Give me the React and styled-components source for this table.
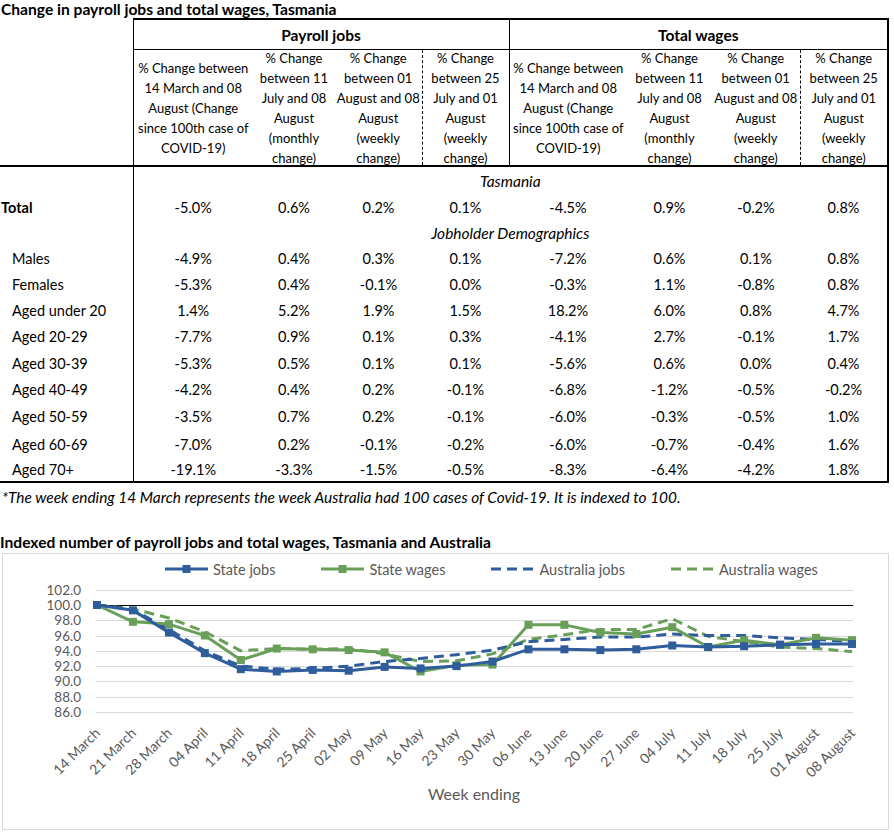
import React from 'react';
import styled, {createGlobalStyle} from 'styled-components';

const GlobalStyle = createGlobalStyle`
  body {
    margin: 0;
    background: #ffffff;
    font-family: Lato, "Liberation Sans", sans-serif;
    color: #000000;
  }
`;

const Page = styled.div`
  width: 894px;
`;

const Title = styled.div`
  font-weight: bold;
  font-size: 15.6px;
  line-height: 18px;
  padding-left: 1px;
`;

const Table = styled.table`
  border-collapse: collapse;
  table-layout: fixed;
  width: 888px;
  font-size: 14.5px;
`;

const EmptyCell = styled.td`
  border-right: 1px solid #000;
  border-bottom: 2px solid #000;
  padding: 0;
`;

const GroupHead = styled.th`
  border-top: 2px solid #000;
  border-bottom: 1px solid #000;
  border-right: ${props => props.$last ? '2px' : '1px'} solid #000;
  height: 29px;
  padding: 0;
  font-size: 15.5px;
  font-weight: bold;
  text-align: center;
`;

const SubHead = styled.td`
  border-bottom: 2px solid #000;
  border-right: ${props => ({dashed: '1px dashed #000', solid: '1px solid #000', thick: '2px solid #000'}[props.$edge] || 'none')};
  padding: 0;
  font-size: 13px;
  text-align: center;
`;

const SubHeadText = styled.div`
  height: 115px;
  line-height: 20px;
  display: flex;
  align-items: center;
  justify-content: center;
  overflow: hidden;
`;

const BodyRow = styled.tr`
  height: ${props => props.$h || 26}px;
  &:last-child td {
    border-bottom: 2px solid #000;
  }
`;

const LabelCell = styled.td`
  border-right: 1px solid #000;
  padding: 0 0 0 ${props => props.$bold ? 1 : 12}px;
  font-weight: ${props => props.$bold ? 'bold' : 'normal'};
  white-space: nowrap;
`;

const ValueCell = styled.td`
  text-align: center;
  padding: 0;
  border-right: ${props => props.$last ? '2px solid #000' : 'none'};
`;

const SectionCell = styled.td`
  text-align: center;
  font-style: italic;
  font-size: 15.5px;
  padding: 0;
  border-right: 2px solid #000;
`;

const Footnote = styled.div`
  font-style: italic;
  font-size: 15.4px;
  line-height: 20px;
  margin-top: 4px;
  padding-left: 2px;
`;

const ChartTitle = styled(Title)`
  margin-top: 26px;
  padding-left: 0;
`;

const ChartBox = styled.div`
  margin: 2px 0 0 2px;
  width: 885px;
  border: 1px solid #d9d9d9;
`;

const Legend = styled.div`
  height: 30px;
  display: flex;
  align-items: center;
  gap: 46px;
  padding-left: 162px;
  font-size: 14.5px;
  color: #595959;
`;

const LegendItem = styled.div`
  display: flex;
  align-items: center;
  gap: 5px;
`;

const Plot = styled.svg`
  display: block;
  overflow: visible;
  font-family: Lato, "Liberation Sans", sans-serif;
`;

const BLUE = '#2f5d9b';
const GREEN = '#6a9f5a';

const heads = [
  ['% Change between', '14 March and 08', 'August (Change', 'since 100th case of', 'COVID-19)'],
  ['% Change', 'between 11', 'July and 08', 'August', '(monthly', 'change)'],
  ['% Change', 'between 01', 'August and 08', 'August', '(weekly', 'change)'],
  ['% Change', 'between 25', 'July and 01', 'August', '(weekly', 'change)'],
];

const rows = [
  {section: 'Tasmania', h: 28},
  {label: 'Total', bold: true, h: 26, v: ['-5.0%', '0.6%', '0.2%', '0.1%', '-4.5%', '0.9%', '-0.2%', '0.8%']},
  {section: 'Jobholder Demographics', h: 25},
  {label: 'Males', v: ['-4.9%', '0.4%', '0.3%', '0.1%', '-7.2%', '0.6%', '0.1%', '0.8%']},
  {label: 'Females', v: ['-5.3%', '0.4%', '-0.1%', '0.0%', '-0.3%', '1.1%', '-0.8%', '0.8%']},
  {label: 'Aged under 20', v: ['1.4%', '5.2%', '1.9%', '1.5%', '18.2%', '6.0%', '0.8%', '4.7%']},
  {label: 'Aged 20-29', h: 27, v: ['-7.7%', '0.9%', '0.1%', '0.3%', '-4.1%', '2.7%', '-0.1%', '1.7%']},
  {label: 'Aged 30-39', v: ['-5.3%', '0.5%', '0.1%', '0.1%', '-5.6%', '0.6%', '0.0%', '0.4%']},
  {label: 'Aged 40-49', v: ['-4.2%', '0.4%', '0.2%', '-0.1%', '-6.8%', '-1.2%', '-0.5%', '-0.2%']},
  {label: 'Aged 50-59', h: 29, v: ['-3.5%', '0.7%', '0.2%', '-0.1%', '-6.0%', '-0.3%', '-0.5%', '1.0%']},
  {label: 'Aged 60-69', v: ['-7.0%', '0.2%', '-0.1%', '-0.2%', '-6.0%', '-0.7%', '-0.4%', '1.6%']},
  {label: 'Aged 70+', h: 25, v: ['-19.1%', '-3.3%', '-1.5%', '-0.5%', '-8.3%', '-6.4%', '-4.2%', '1.8%']},
];

const weeks = ['14 March', '21 March', '28 March', '04 April', '11 April', '18 April', '25 April', '02 May', '09 May', '16 May', '23 May',
  '30 May', '06 June', '13 June', '20 June', '27 June', '04 July', '11 July', '18 July', '25 July', '01 August', '08 August'];

const series = [
  {name: 'State jobs', color: BLUE, marker: true,
    data: [100, 99.3, 96.4, 93.7, 91.6, 91.3, 91.5, 91.4, 91.9, 91.7, 92.0, 92.6, 94.2, 94.2, 94.1, 94.2, 94.7, 94.5, 94.6, 94.8, 94.9, 94.9]},
  {name: 'State wages', color: GREEN, marker: true,
    data: [100, 97.8, 97.5, 96.0, 92.8, 94.3, 94.2, 94.1, 93.8, 91.3, 92.1, 92.2, 97.4, 97.4, 96.4, 96.2, 97.1, 94.5, 95.4, 94.8, 95.7, 95.4]},
  {name: 'Australia jobs', color: BLUE, dashed: true,
    data: [100, 99.4, 96.8, 94.0, 92.0, 91.6, 91.7, 92.0, 92.6, 93.0, 93.5, 94.1, 95.2, 95.5, 95.8, 95.8, 96.2, 96.0, 96.0, 95.7, 95.5, 95.2]},
  {name: 'Australia wages', color: GREEN, dashed: true,
    data: [100, 99.5, 98.3, 96.5, 94.0, 94.3, 94.2, 94.3, 93.6, 92.6, 92.7, 93.6, 95.5, 96.1, 96.8, 96.8, 98.2, 95.9, 95.2, 94.5, 94.3, 93.9]},
];

const X0 = 97;
const X1 = 852;
const xOf = i => X0 + i * (X1 - X0) / (weeks.length - 1);
const yOf = v => 605 - (v - 100) * 7.64;
const ticks = [102, 100, 98, 96, 94, 92, 90, 88, 86];

const Swatch = ({color, dashed, marker}) => (
  <svg width="43" height="12">
    <line x1="0" y1="6" x2="43" y2="6" stroke={color} strokeWidth="3" strokeDasharray={dashed ? '10 6' : undefined}/>
    {marker && <rect x="17.5" y="2" width="8" height="8" fill={color}/>}
  </svg>
);

const Chart = () => (
  <ChartBox>
    <Legend>
      {series.map(s => (
        <LegendItem key={s.name}>
          <Swatch color={s.color} dashed={s.dashed} marker={s.marker}/>
          <span>{s.name}</span>
        </LegendItem>
      ))}
    </Legend>
    <Plot width="885" height="245" viewBox="3 584 885 245">
      {ticks.map(t => {
        const gy = Math.round(yOf(t)) + 0.5;
        return (
          <g key={t}>
            <line x1="96" x2="853" y1={gy} y2={gy} stroke={t === 100 ? '#000' : '#d9d9d9'} strokeWidth="1"/>
            <text x="81" y={yOf(t) + 5} textAnchor="end" fontSize="13.5" fill="#595959">{t.toFixed(1)}</text>
          </g>
        );
      })}
      {series.slice().reverse().map(s => (
        <g key={s.name}>
          <polyline fill="none" stroke={s.color} strokeWidth="3" strokeLinejoin="round"
            strokeDasharray={s.dashed ? '10 6' : undefined}
            points={s.data.map((v, i) => `${xOf(i)},${yOf(v)}`).join(' ')}/>
          {s.marker && s.data.map((v, i) => (
            <rect key={i} x={xOf(i) - 4} y={yOf(v) - 4} width="8" height="8" fill={s.color}/>
          ))}
        </g>
      ))}
      {weeks.map((w, i) => (
        <text key={w} x={xOf(i) + 4} y="734" textAnchor="end" fontSize="14" fill="#595959"
          transform={`rotate(-45 ${xOf(i) + 4} 734)`}>{w}</text>
      ))}
      <text x="474" y="800" textAnchor="middle" fontSize="16" fill="#595959">Week ending</text>
    </Plot>
  </ChartBox>
);

const HeadCells = ({last}) => heads.map((lines, i) => (
  <SubHead key={i} $edge={i === 2 ? 'dashed' : i === 3 ? (last ? 'thick' : 'solid') : 'none'}>
    <SubHeadText>
      <div>{lines.map((l, j) => <React.Fragment key={j}>{l}{j < lines.length - 1 && <br/>}</React.Fragment>)}</div>
    </SubHeadText>
  </SubHead>
));

const App = () => (
  <Page>
    <GlobalStyle/>
    <Title>Change in payroll jobs and total wages, Tasmania</Title>
    <Table>
      <colgroup>
        <col style={{width: 133}}/>
        <col style={{width: 120}}/>
        <col style={{width: 82}}/>
        <col style={{width: 87}}/>
        <col style={{width: 87}}/>
        <col style={{width: 118}}/>
        <col style={{width: 85}}/>
        <col style={{width: 88}}/>
        <col style={{width: 88}}/>
      </colgroup>
      <tbody>
        <tr>
          <EmptyCell rowSpan={2}/>
          <GroupHead colSpan={4}>Payroll jobs</GroupHead>
          <GroupHead colSpan={4} $last>Total wages</GroupHead>
        </tr>
        <tr>
          <HeadCells/>
          <HeadCells last/>
        </tr>
        {rows.map((r, i) => r.section ? (
          <BodyRow key={i} $h={r.h}>
            <LabelCell/>
            <SectionCell colSpan={8}>{r.section}</SectionCell>
          </BodyRow>
        ) : (
          <BodyRow key={i} $h={r.h}>
            <LabelCell $bold={r.bold}>{r.label}</LabelCell>
            {r.v.map((v, j) => <ValueCell key={j} $last={j === 7}>{v}</ValueCell>)}
          </BodyRow>
        ))}
      </tbody>
    </Table>
    <Footnote>*The week ending 14 March represents the week Australia had 100 cases of Covid-19. It is indexed to 100.</Footnote>
    <ChartTitle>Indexed number of payroll jobs and total wages, Tasmania and Australia</ChartTitle>
    <Chart/>
  </Page>
);

export default App;
